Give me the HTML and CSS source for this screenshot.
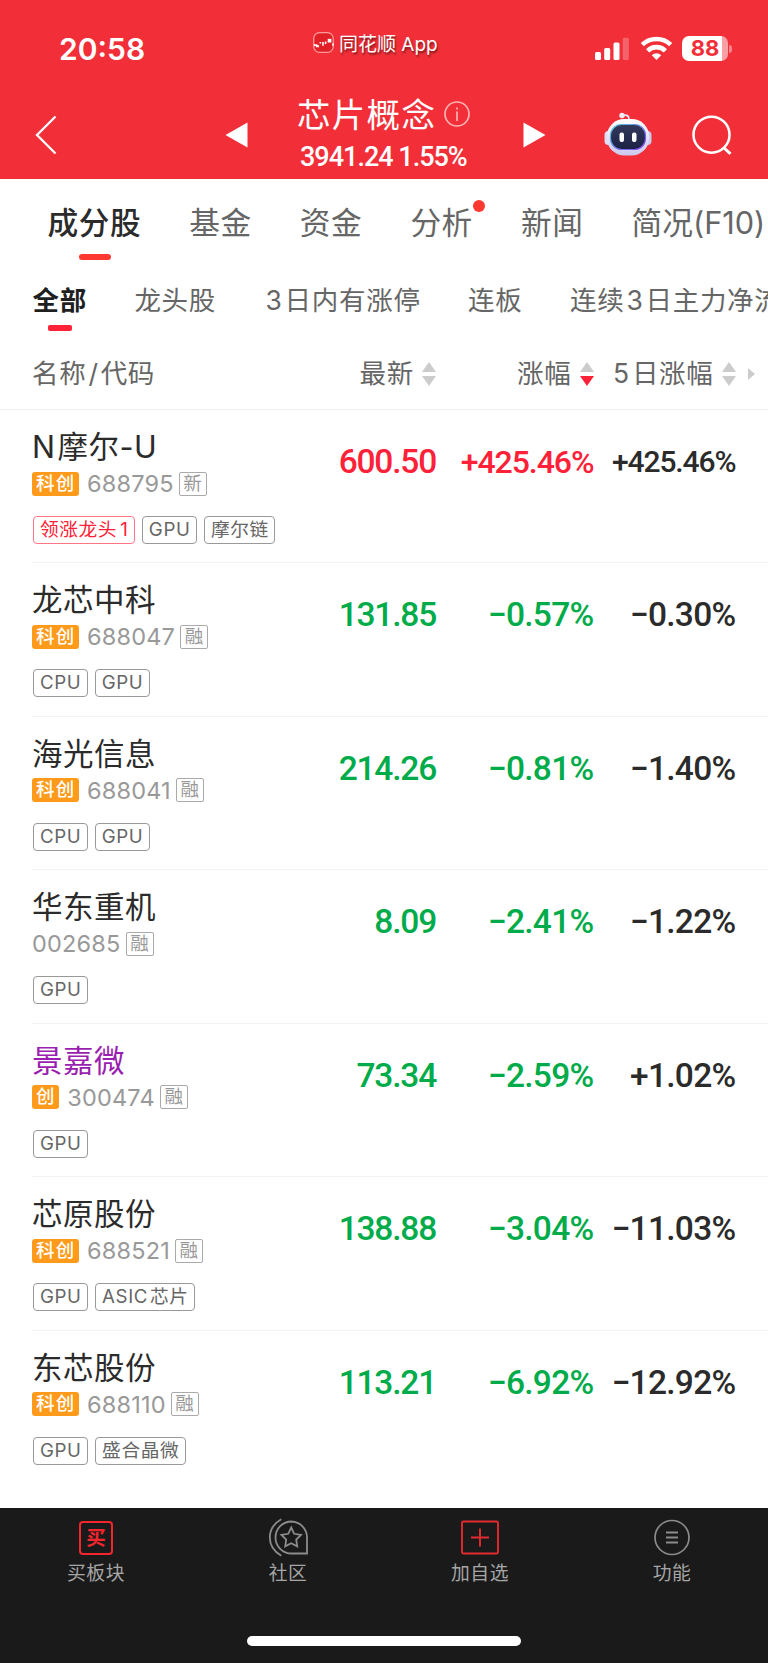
FILE: index.html
```html
<!DOCTYPE html>
<html lang="zh-CN">
<head>
  <meta charset="UTF-8">
  <meta name="viewport" content="width=device-width, initial-scale=1.0">
  <title>芯片概念 - 成分股</title>
  <link rel="stylesheet" href="styles.css">
</head>
<body>
  <header class="header">
    <div class="status-bar">
      <div class="time">20:58</div>
      <div class="app-name">
        <svg class="app-logo" viewBox="0 0 20 20">
          <rect x="0.7" y="0.7" width="18.6" height="18.6" rx="5.5" fill="#e02026" stroke="#ff9a9a" stroke-width="1.2"/>
          <path d="M1 12.500h2.500v2M5 14.500v-2M7 9.500v1.500M9.500 9.500v3.500M12 9v2.500M19 11v2" fill="none" stroke="#fff" stroke-width="1.500"/>
          <path d="M14 6.500h3.500v3.500H14z" fill="#fff"/>
        </svg>
        <span>同花顺 App</span>
      </div>
      <div class="status-icons">
        <svg width="34" height="24" viewBox="0 0 34 24" fill="#fff">
          <rect x="0" y="15" width="6" height="8" rx="1.500"/>
          <rect x="9.200" y="11" width="6" height="12" rx="1.500"/>
          <rect x="18.500" y="5.500" width="6" height="17.500" rx="1.500"/>
          <rect x="27.800" y="0.700" width="6" height="22.300" rx="1.500" opacity="0.250"/>
        </svg>
        <svg class="wifi" width="33" height="24" viewBox="0 0 33 24" fill="none" stroke="#fff" stroke-width="4.600">
          <path d="M2.300 8.700a20.400 20.400 0 0 1 28.400 0"/>
          <path d="M7.600 14.800a12.600 12.600 0 0 1 17.800 0"/>
          <path d="M16.500 24l-4.700-4.800a6.700 6.700 0 0 1 9.400 0z" fill="#fff" stroke="none"/>
        </svg>
        <div class="battery"><span>88</span></div>
        <div class="battery-cap"></div>
      </div>
    </div>

    <div class="nav-bar">
      <svg class="back" width="22" height="40" viewBox="0 0 22 40"><path d="M20.500 1.500L2 20l18.500 18.500" fill="none" stroke="#fff" stroke-width="2.300"/></svg>
      <svg class="prev" width="23" height="26" viewBox="0 0 23 26"><path d="M0.500 13L22.500 0.500v25z" fill="#fff"/></svg>
      <div class="title-box">
        <div class="title">芯片概念
          <svg class="info" width="26" height="26" viewBox="0 0 26 26" fill="none" stroke="#ffb3b3" stroke-width="1.700">
            <circle cx="13" cy="13" r="12"/>
            <path d="M13 10.500v9.500M13 6.500v2"/>
          </svg>
        </div>
        <div class="quote">3941.24 1.55%</div>
      </div>
      <svg class="next" width="23" height="26" viewBox="0 0 23 26"><path d="M22.500 13L0.500 0.500v25z" fill="#fff"/></svg>
      <svg class="robot" width="48" height="44" viewBox="0 0 48 44">
        <defs>
          <linearGradient id="shell" x1="0" y1="0" x2="0" y2="1">
            <stop offset="0" stop-color="#ffffff"/><stop offset="1" stop-color="#cbc8ee"/>
          </linearGradient>
          <linearGradient id="rim" x1="0" y1="0" x2="1" y2="1">
            <stop offset="0" stop-color="#55cfe0"/><stop offset="1" stop-color="#8a3df0"/>
          </linearGradient>
          <linearGradient id="face" x1="0" y1="0" x2="0" y2="1">
            <stop offset="0" stop-color="#333a5c"/><stop offset="1" stop-color="#1a2145"/>
          </linearGradient>
        </defs>
        <path d="M18 3.500c5-1 7 0 7 4" fill="none" stroke="#e6e2f5" stroke-width="1.800"/>
        <circle cx="18" cy="3.500" r="2.700" fill="#f2eafa"/>
        <rect x="0.500" y="19" width="9" height="14" rx="4" fill="#dcdcf6"/>
        <rect x="38.500" y="19" width="9" height="14" rx="4" fill="#c9c9ef"/>
        <rect x="2.800" y="7" width="42.400" height="36.500" rx="17.500" fill="url(#shell)"/>
        <rect x="6.500" y="12.500" width="35" height="25" rx="11" fill="url(#face)" stroke="url(#rim)" stroke-width="1.200"/>
        <rect x="15.500" y="20.500" width="4.500" height="9.500" rx="2" fill="#fff"/>
        <rect x="28" y="20.500" width="4.500" height="9.500" rx="2" fill="#fff"/>
      </svg>
      <svg class="search" width="40" height="40" viewBox="0 0 40 40" fill="none" stroke="#fff" stroke-width="2.500">
        <circle cx="19.500" cy="19.700" r="18"/>
        <path d="M31.500 32.500l7 6.300" stroke-width="3"/>
      </svg>
    </div>
  </header>

  <nav class="tabs">
    <a class="tab active">成分股</a>
    <a class="tab">基金</a>
    <a class="tab">资金</a>
    <a class="tab has-dot">分析</a>
    <a class="tab">新闻</a>
    <a class="tab">简况(F10)</a>
  </nav>

  <nav class="filters">
    <a class="filter active">全部</a>
    <a class="filter">龙头股</a>
    <a class="filter"><span class="n">3</span>日内有涨停</a>
    <a class="filter">连板</a>
    <a class="filter">连续<span class="n">3</span>日主力净流</a>
  </nav>

  <div class="grid table-head">
    <div class="th-name">名称<span class="n">/</span>代码</div>
    <div class="th">最新<i class="sort"></i></div>
    <div class="th">涨幅<i class="sort desc"></i></div>
    <div class="th"><span><span class="n">5</span>日涨幅</span><i class="sort"></i></div>
    <i class="more"></i>
  </div>

  <main class="list">
    <div class="grid row">
      <div class="stock">
        <div class="name latin"><span class="n">N</span>摩尔-U</div>
        <div class="code"><b>科创</b><span>688795</span><em>新</em></div>
        <div class="tags"><span class="tag hot">领涨龙头<span class="n">1</span></span><span class="tag">GPU</span><span class="tag">摩尔链</span></div>
      </div>
      <div class="num up">600.50</div>
      <div class="num up mid">+425.46%</div>
      <div class="num small">+425.46%</div>
    </div>
    <div class="grid row">
      <div class="stock">
        <div class="name">龙芯中科</div>
        <div class="code"><b>科创</b><span>688047</span><em>融</em></div>
        <div class="tags"><span class="tag">CPU</span><span class="tag">GPU</span></div>
      </div>
      <div class="num down">131.85</div>
      <div class="num down pct">−0.57%</div>
      <div class="num pct">−0.30%</div>
    </div>
    <div class="grid row">
      <div class="stock">
        <div class="name">海光信息</div>
        <div class="code"><b>科创</b><span>688041</span><em>融</em></div>
        <div class="tags"><span class="tag">CPU</span><span class="tag">GPU</span></div>
      </div>
      <div class="num down">214.26</div>
      <div class="num down pct">−0.81%</div>
      <div class="num pct">−1.40%</div>
    </div>
    <div class="grid row">
      <div class="stock">
        <div class="name">华东重机</div>
        <div class="code"><span>002685</span><em>融</em></div>
        <div class="tags"><span class="tag">GPU</span></div>
      </div>
      <div class="num down">8.09</div>
      <div class="num down pct">−2.41%</div>
      <div class="num pct">−1.22%</div>
    </div>
    <div class="grid row">
      <div class="stock">
        <div class="name own">景嘉微</div>
        <div class="code"><b>创</b><span>300474</span><em>融</em></div>
        <div class="tags"><span class="tag">GPU</span></div>
      </div>
      <div class="num down">73.34</div>
      <div class="num down pct">−2.59%</div>
      <div class="num pct">+1.02%</div>
    </div>
    <div class="grid row">
      <div class="stock">
        <div class="name">芯原股份</div>
        <div class="code"><b>科创</b><span>688521</span><em>融</em></div>
        <div class="tags"><span class="tag">GPU</span><span class="tag"><span class="n">ASIC</span>芯片</span></div>
      </div>
      <div class="num down">138.88</div>
      <div class="num down pct">−3.04%</div>
      <div class="num pct">−11.03%</div>
    </div>
    <div class="grid row">
      <div class="stock">
        <div class="name">东芯股份</div>
        <div class="code"><b>科创</b><span>688110</span><em>融</em></div>
        <div class="tags"><span class="tag">GPU</span><span class="tag">盛合晶微</span></div>
      </div>
      <div class="num down">113.21</div>
      <div class="num down pct">−6.92%</div>
      <div class="num pct">−12.92%</div>
    </div>
  </main>

  <footer class="footer">
    <div class="actions">
      <div class="action">
        <div class="buy-icon">买</div>
        <span>买板块</span>
      </div>
      <div class="action">
        <svg width="40" height="40" viewBox="0 0 40 40" fill="none" stroke="#8c8c8c" stroke-width="1.800">
          <path d="M23.500 4.500A16 16 0 0 0 23.500 36.500H39V20.500A16 16 0 0 0 23.500 4.500z"/>
          <path d="M13.300 2.300C-2 11-2 30 13.300 38.700"/>
          <path d="M23.200 10.500l3 6.300 6.800 1-4.800 4.800 1 6.800-6-3.200-6 3.200 1-6.800-4.800-4.800 6.800-1z"/>
        </svg>
        <span>社区</span>
      </div>
      <div class="action">
        <svg width="40" height="40" viewBox="0 0 40 40" fill="none" stroke="#e32b2f" stroke-width="1.900">
          <rect x="2" y="4.500" width="36" height="32" rx="1.500"/>
          <path d="M20 11.500v18M11 20.500h18"/>
        </svg>
        <span>加自选</span>
      </div>
      <div class="action">
        <svg width="40" height="40" viewBox="0 0 40 40" fill="none" stroke="#8c8c8c" stroke-width="1.700">
          <circle cx="20" cy="20.500" r="17"/>
          <path d="M14 15.500h12M14 20.500h12M14 25.500h12" stroke-width="2"/>
        </svg>
        <span>功能</span>
      </div>
    </div>
    <div class="home-bar"></div>
  </footer>
</body>
</html>
```

FILE: styles.css
```css
* {
  box-sizing: border-box;
}

body {
  margin: 0;
  width: 768px;
  height: 1663px;
  display: flex;
  flex-direction: column;
  overflow: hidden;
  background: #fff;
  color: #2b2b2b;
  font-family: Inter, "Noto Sans CJK SC", sans-serif;
}

svg {
  display: block;
  flex: none;
}

/* 中文里的数字、字母两侧留一点空 */
.n {
  margin: 0 2px;
}

/* 顶部 */
.header {
  flex: none;
  height: 179px;
  background: #f22f38;
  color: #fff;
}

.status-bar {
  display: grid;
  grid-template-columns: 313px 282px 173px;
  height: 89px;
}

.time {
  padding: 31px 0 0 59px;
  font-size: 30px;
  line-height: 36px;
  font-weight: 600;
}

.app-name {
  display: flex;
  gap: 5px;
  padding-top: 32px;
  font-size: 19px;
  line-height: 26px;
  text-shadow: 1px 2px 2px rgba(0, 0, 0, .5);
}

.app-logo {
  width: 21px;
  height: 21px;
}

.status-icons {
  display: flex;
  padding-top: 37px;
}

.wifi {
  margin: -1px 9px 0 11px;
}

.battery {
  width: 46px;
  height: 25px;
  margin-top: -1px;
  border-radius: 7px;
  background: linear-gradient(90deg, #fff 40px, #f9a0a4 40px);
  color: #f22f38;
  font-size: 22px;
  line-height: 25px;
  font-weight: 700;
  text-align: center;
}

.battery-cap {
  width: 3px;
  height: 8px;
  margin: 8px 0 0 1px;
  border-radius: 0 4px 4px 0;
  background: #f9868b;
}

.nav-bar {
  display: flex;
  height: 90px;
  padding-left: 35px;
}

.back {
  margin-top: 26px;
}

.prev {
  margin: 33px 0 0 168px;
}

.title-box {
  width: 175px;
  margin-left: 49px;
}

.title {
  display: flex;
  align-items: center;
  height: 50px;
  padding-bottom: 3px;
  font-size: 33.500px;
  letter-spacing: 1.300px;
  white-space: nowrap;
}

.info {
  margin: 2px 0 0 8px;
}

.quote {
  padding-left: 3px;
  font-family: Roboto, sans-serif;
  font-size: 27px;
  line-height: 36px;
  font-weight: 500;
  letter-spacing: -1px;
  white-space: nowrap;
}

.next {
  margin: 33px 0 0 51px;
}

.robot {
  margin: 23px 0 0 58px;
}

.search {
  margin: 26px 0 0 40px;
}

/* 标签栏 */
.tabs {
  display: flex;
  flex: none;
  gap: 48.200px;
  height: 87px;
  padding-left: 47.500px;
  font-size: 30.700px;
  line-height: 87px;
  letter-spacing: .500px;
  color: #666;
  white-space: nowrap;
}

.tab,
.filter {
  position: relative;
}

.tab.active {
  color: #2b2b2b;
  font-weight: 500;
}

.tab.active::after {
  content: "";
  position: absolute;
  left: 31px;
  top: 75px;
  width: 32px;
  height: 6px;
  border-radius: 3px;
  background: #ff3830;
}

.tab.has-dot::after {
  content: "";
  position: absolute;
  right: -12px;
  top: 21px;
  width: 12px;
  height: 12px;
  border-radius: 50%;
  background: #ff3830;
}

.tab:last-child {
  letter-spacing: 0;
}

.filters {
  display: flex;
  flex: none;
  gap: 47.500px;
  height: 70px;
  padding-left: 32.500px;
  font-size: 26.500px;
  line-height: 69px;
  letter-spacing: .700px;
  color: #666;
  white-space: nowrap;
}

.filter.active {
  color: #1f1f1f;
  font-weight: 700;
}

.filter.active::after {
  content: "";
  position: absolute;
  left: 15px;
  top: 59px;
  width: 24px;
  height: 6px;
  border-radius: 2px;
  background: #ff2137;
}

/* 表格 */
.grid {
  display: grid;
  grid-template-columns: 256px 148px 157.500px 142px 32.500px;
}

.table-head {
  flex: none;
  height: 74px;
  padding-left: 32px;
  border-bottom: 1px solid #f0f0f0;
  font-size: 26.500px;
  line-height: 75px;
  letter-spacing: .700px;
  color: #666;
}

.th {
  display: flex;
  align-items: center;
  justify-content: flex-end;
  gap: 8px;
  white-space: nowrap;
}

.sort {
  display: flex;
  flex-direction: column;
  gap: 4px;
}

.sort::before,
.sort::after {
  content: "";
  border: 7px solid transparent;
}

.sort::before {
  border-top: 0;
  border-bottom: 10px solid #ccc;
}

.sort::after {
  border-bottom: 0;
  border-top: 10px solid #ccc;
}

.sort.desc::after {
  border-top-color: #ff2137;
}

.more {
  align-self: center;
  margin-left: 12.500px;
  border: 6px solid transparent;
  border-left: 7px solid #ccc;
  border-right: 0;
  width: 7px;
}

.list {
  flex: none;
  height: 1098px;
  padding-left: 32px;
}

.row {
  height: 153.450px;
  border-bottom: 1.500px solid #f3f3f3;
}

.row:last-child {
  border-bottom: 0;
}

.name {
  height: 40px;
  margin-top: 17px;
  font-size: 30.500px;
  line-height: 40px;
  letter-spacing: .500px;
  white-space: nowrap;
}

.name.latin .n {
  margin-left: 0;
}

.name.own {
  color: #9a1fb0;
}

.code {
  display: flex;
  align-items: center;
  height: 24px;
  margin-top: 4.500px;
  font-size: 23.500px;
  letter-spacing: .200px;
  color: #999;
}

.code b,
.code em {
  height: 24px;
  font-size: 18.500px;
  line-height: 23px;
  font-style: normal;
  font-weight: 500;
}

.code b {
  margin-right: 8px;
  padding: 0 3.500px 0 4px;
  border-radius: 3px;
  background: #ff9a1a;
  color: #fff;
  letter-spacing: 1.200px;
}

.code em {
  width: 28px;
  margin-left: 5px;
  border: 1px solid #aaa;
  border-radius: 2px;
  line-height: 21px;
  font-weight: 400;
  text-align: center;
}

.tags {
  display: flex;
  gap: 7px;
  margin: 20.500px 0 0 1px;
}

.tag {
  height: 28px;
  padding: 0 5.500px 0 6px;
  border: 1px solid #999;
  border-radius: 4px;
  font-size: 18.700px;
  line-height: 26px;
  letter-spacing: .600px;
  color: #666;
  white-space: nowrap;
}

.tag .n {
  margin: 0;
}

.tag .n:first-child {
  margin-right: 2px;
}

.tag.hot {
  border-color: #ff7583;
  color: #ff2137;
}

.tag.hot .n {
  margin: 0 0 0 3px;
}

.num {
  padding-top: 32px;
  font-family: Roboto, sans-serif;
  font-size: 33.500px;
  line-height: 40px;
  font-weight: 500;
  letter-spacing: -1.200px;
  text-align: right;
  white-space: nowrap;
}

.num.pct {
  letter-spacing: -.700px;
}

.num.mid {
  font-size: 32px;
  letter-spacing: -1.050px;
}

.num.small {
  font-size: 30px;
  letter-spacing: -1.100px;
}

.up {
  color: #ff2137;
}

.down {
  color: #00ab4a;
}

/* 底部 */
.footer {
  flex: none;
  height: 155px;
  background: #1a1a1a;
}

.actions {
  display: grid;
  grid-template-columns: repeat(4, 1fr);
  height: 128px;
  padding-top: 9px;
}

.action {
  display: flex;
  flex-direction: column;
  align-items: center;
  font-size: 18.800px;
  line-height: 33px;
  letter-spacing: .500px;
  color: #a6a6a6;
}

.buy-icon {
  width: 34px;
  height: 34px;
  margin: 4px 0 2px;
  border: 2px solid #f5252d;
  border-radius: 4px;
  color: #f5252d;
  font-size: 19.500px;
  line-height: 30px;
  font-weight: 700;
  letter-spacing: 0;
  text-align: center;
}

.home-bar {
  width: 274px;
  height: 10px;
  margin: 0 auto;
  border-radius: 5px;
  background: #fff;
}
```
